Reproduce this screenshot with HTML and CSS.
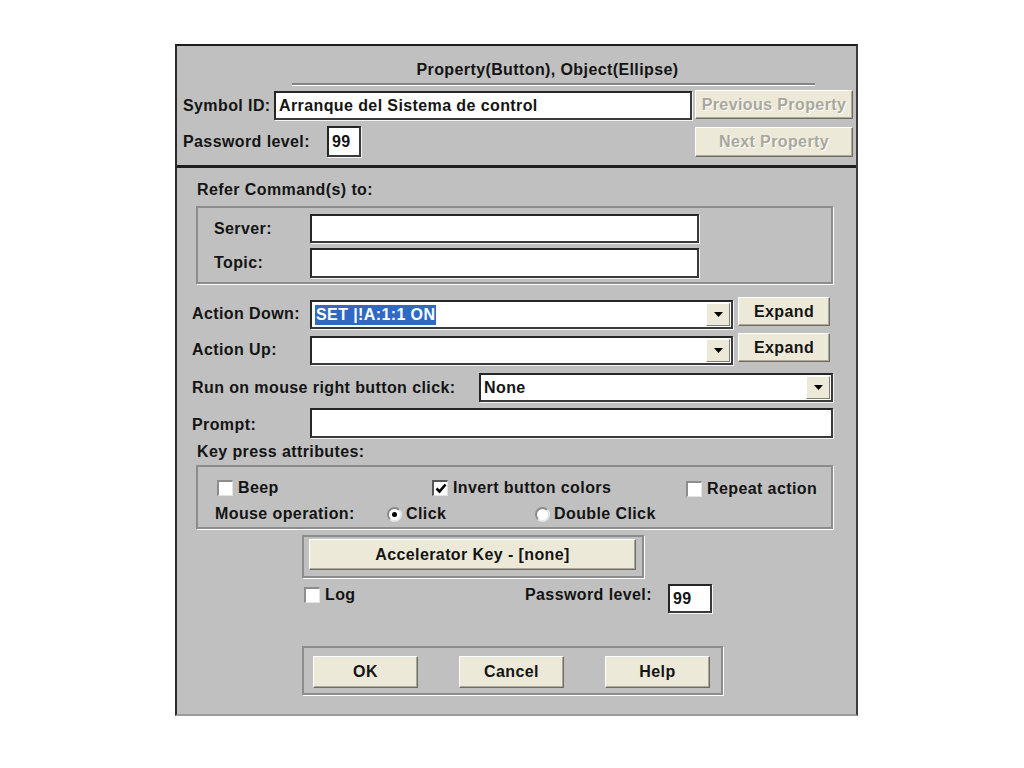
FILE: index.html
```html
<!DOCTYPE html>
<html lang="en">
<head>
  <meta charset="UTF-8">
  <title>Property(Button), Object(Ellipse)</title>
  <link rel="stylesheet" href="styles.css">
</head>
<body>
  <div class="dialog">

    <div class="top-panel">
      <div class="title">Property(Button), Object(Ellipse)</div>
      <div class="separator"></div>

      <div class="row row-symbol">
        <span class="lbl lbl-symbol">Symbol ID:</span>
        <div class="field field-symbol">Arranque del Sistema de control</div>
        <button class="btn btn-nav btn-prev" disabled>Previous Property</button>
      </div>

      <div class="row row-pass">
        <span class="lbl lbl-pass">Password level:</span>
        <div class="field field-small">99</div>
        <button class="btn btn-nav btn-next" disabled>Next Property</button>
      </div>
    </div>

    <div class="main-panel">
      <div class="heading">Refer Command(s) to:</div>
      <div class="group group-refer">
        <div class="refer-row">
          <span class="lbl lbl-refer">Server:</span>
          <div class="field field-refer"></div>
        </div>
        <div class="refer-row refer-topic">
          <span class="lbl lbl-refer">Topic:</span>
          <div class="field field-refer"></div>
        </div>
      </div>

      <div class="action-row action-down">
        <span class="lbl lbl-action">Action Down:</span>
        <div class="combo combo-action">
          <div class="combo-text"><span class="sel">SET |!A:1:1 ON</span></div>
          <div class="drop"><svg width="9" height="5" viewBox="0 0 9 5"><polygon points="0,0 9,0 4.5,5" fill="#000"/></svg></div>
        </div>
        <button class="btn btn-expand">Expand</button>
      </div>

      <div class="action-row action-up">
        <span class="lbl lbl-action">Action Up:</span>
        <div class="combo combo-action">
          <div class="combo-text"></div>
          <div class="drop"><svg width="9" height="5" viewBox="0 0 9 5"><polygon points="0,0 9,0 4.5,5" fill="#000"/></svg></div>
        </div>
        <button class="btn btn-expand">Expand</button>
      </div>

      <div class="run-row">
        <span class="lbl lbl-run">Run on mouse right button click:</span>
        <div class="combo combo-run">
          <div class="combo-text">None</div>
          <div class="drop"><svg width="9" height="5" viewBox="0 0 9 5"><polygon points="0,0 9,0 4.5,5" fill="#000"/></svg></div>
        </div>
      </div>

      <div class="prompt-row">
        <span class="lbl lbl-prompt">Prompt:</span>
        <div class="field field-prompt"></div>
      </div>

      <div class="heading heading-key">Key press attributes:</div>
      <div class="group group-key">
        <div class="key-row">
          <div class="opt opt-beep"><span class="chk"></span>Beep</div>
          <div class="opt opt-invert">
            <span class="chk"><svg width="12" height="11" viewBox="0 0 12 11"><path d="M1.5 5.5 L4.5 8.5 L10.5 1.5" fill="none" stroke="#000" stroke-width="2.6"/></svg></span>Invert button colors
          </div>
          <div class="opt opt-repeat"><span class="chk"></span>Repeat action</div>
        </div>
        <div class="mouse-row">
          <span class="lbl lbl-mouse">Mouse operation:</span>
          <div class="opt opt-click"><span class="radio checked"></span>Click</div>
          <div class="opt"><span class="radio"></span>Double Click</div>
        </div>
      </div>

      <div class="group group-accel">
        <button class="btn btn-accel">Accelerator Key - [none]</button>
      </div>

      <div class="log-row">
        <div class="opt opt-log"><span class="chk"></span>Log</div>
        <span class="lbl lbl-pass2">Password level:</span>
        <div class="field field-pass2">99</div>
      </div>

      <div class="group group-buttons">
        <button class="btn btn-main">OK</button>
        <button class="btn btn-main">Cancel</button>
        <button class="btn btn-main">Help</button>
      </div>
    </div>

  </div>
</body>
</html>
```

FILE: styles.css
```css
* {
  box-sizing: border-box;
}
body {
  margin: 0;
  background-color: #fff;
  font-family: "Liberation Sans", Arial, sans-serif;
  font-weight: bold;
  font-size: 16px;
  letter-spacing: 0.4px;
  color: #141414;
}
.dialog {
  margin: 44px 0 0 175px;
  width: 683px;
  height: 672px;
  display: flex;
  flex-direction: column;
  background-color: #c0c0c0;
  border-top: 2px solid #1c1c1c;
  border-left: 2px solid #2a2a2a;
  border-right: 2px solid #3c3c3c;
  border-bottom: 2px solid #9c9c9c;
}

/* top part */
.top-panel {
  padding: 0 3px 8px 6px;
  border-bottom: 3px solid #1e1e1e;
}
.title {
  margin: 14px 0 0 109px;
  width: 523px;
  padding-right: 12px;
  line-height: 20px;
  text-align: center;
}
.separator {
  margin: 3px 0 0 109px;
  width: 523px;
  border-top: 2px solid #858585;
  border-bottom: 1px solid #fff;
}
.row {
  display: flex;
  align-items: center;
  height: 31px;
}
.row-symbol {
  margin-top: 4px;
}
.row-pass {
  margin-top: 5px;
}
.lbl {
  white-space: nowrap;
  flex-shrink: 0;
}
.lbl-symbol { width: 91px; }
.lbl-pass { width: 144px; }

.field {
  background-color: #fff;
  border: 2px solid #262626;
  border-right-color: #3a3a3a;
  border-bottom-color: #3a3a3a;
  box-shadow: 1px 1px 0 #f4f4f4;
  padding: 0 3px;
  line-height: 25px;
  white-space: nowrap;
  overflow: hidden;
}
.field-symbol {
  width: 418px;
  height: 29px;
}
.field-small {
  width: 34px;
  height: 31px;
  line-height: 27px;
}

.btn {
  font: inherit;
  letter-spacing: inherit;
  color: #141414;
  background-color: #ece9d8;
  border: 1px solid;
  border-color: #fff #6f6d63 #6f6d63 #fff;
  box-shadow: inset -1px -1px 0 #aca899;
  padding: 0;
  text-align: center;
}
.btn-nav {
  margin-left: auto;
  width: 158px;
  color: #a9a79c;
  text-shadow: 1px 1px 0 #fff;
}
.btn-prev {
  height: 29px;
  align-self: flex-start;
}
.btn-next {
  height: 30px;
  align-self: flex-start;
  margin-top: 1px;
}

/* lower part */
.main-panel {
  flex: 1;
  padding: 12px 23px 0 15px;
}
.heading {
  margin-left: 5px;
  line-height: 20px;
}
.group {
  border: 2px solid #8c8c8c;
  box-shadow: 1px 1px 0 #fff;
}
.group-refer {
  margin: 6px 0 0 4px;
  padding: 6px 0 4px 16px;
}
.refer-row {
  display: flex;
  align-items: center;
  height: 29px;
}
.refer-topic {
  margin-top: 5px;
  height: 30px;
}
.lbl-refer { width: 96px; }
.field-refer {
  width: 389px;
  height: 100%;
}

.action-row {
  display: flex;
  align-items: flex-start;
}
.action-down { margin-top: 13px; }
.action-up { margin-top: 4px; }
.lbl-action {
  width: 118px;
  line-height: 29px;
  margin-top: 2px;
}
.combo {
  display: flex;
  align-items: center;
  height: 29px;
  background-color: #fff;
  border: 2px solid #262626;
  border-right-color: #3a3a3a;
  border-bottom-color: #3a3a3a;
  box-shadow: 1px 1px 0 #f4f4f4;
}
.combo-action {
  width: 423px;
  margin-top: 3px;
}
.combo-text {
  flex: 1;
  padding-left: 3px;
  white-space: nowrap;
}
.sel {
  background-color: #3168c4;
  color: #fff;
  padding: 1px 1px 2px;
}
.drop {
  width: 24px;
  height: 23px;
  margin-right: 1px;
  display: flex;
  align-items: center;
  justify-content: center;
  background-color: #ece9d8;
  border: 1px solid;
  border-color: #fff #807e72 #807e72 #fff;
}
.btn-expand {
  margin-left: 5px;
  width: 92px;
  height: 29px;
}

.run-row {
  display: flex;
  align-items: center;
  margin-top: 8px;
}
.lbl-run { width: 287px; }
.combo-run { width: 354px; }

.prompt-row {
  display: flex;
  align-items: flex-start;
  margin-top: 6px;
}
.lbl-prompt {
  width: 118px;
  line-height: 20px;
  margin-top: 7px;
}
.field-prompt {
  width: 523px;
  height: 30px;
}

.heading-key {
  margin-top: 4px;
}
.group-key {
  margin: 3px 0 0 4px;
  height: 64px;
  padding: 9px 0 0 19px;
}
.key-row,
.mouse-row {
  display: flex;
  align-items: center;
  line-height: 20px;
}
.mouse-row {
  margin-top: 5px;
  margin-left: -2px;
}
.opt {
  display: flex;
  align-items: center;
  white-space: nowrap;
}
.opt-beep { width: 215px; }
.opt-invert { width: 254px; }
.opt-repeat { margin-top: 3px; }
.lbl-mouse { width: 172px; }
.opt-click { width: 148px; }
.chk {
  width: 16px;
  height: 16px;
  margin-right: 5px;
  display: flex;
  align-items: center;
  justify-content: center;
  background-color: #fff;
  border-top: 2px solid #8d8d8d;
  border-left: 2px solid #8d8d8d;
  border-right: 1px solid #e2e2e2;
  border-bottom: 1px solid #e2e2e2;
}
.opt-invert .chk {
  border-top-color: #555;
  border-left-color: #555;
}
.radio {
  width: 15px;
  height: 15px;
  margin-right: 4px;
  border-radius: 50%;
  background-color: #fff;
  border: 2px solid;
  border-color: #8a8a8a #e6e6e6 #e6e6e6 #8a8a8a;
  display: flex;
  align-items: center;
  justify-content: center;
}
.radio.checked::after {
  content: "";
  width: 5px;
  height: 5px;
  border-radius: 50%;
  background-color: #000;
}

.group-accel {
  margin: 6px 0 0 110px;
  width: 342px;
  height: 43px;
  padding: 2px 0 0 5px;
}
.btn-accel {
  width: 327px;
  height: 31px;
}

.log-row {
  display: flex;
  align-items: flex-start;
  height: 29px;
  margin-top: 6px;
}
.opt-log {
  margin-left: 112px;
  width: 221px;
  line-height: 20px;
  margin-top: 1px;
}
.lbl-pass2 {
  width: 143px;
  line-height: 20px;
  margin-top: 1px;
}
.field-pass2 {
  width: 44px;
  height: 29px;
}

.group-buttons {
  margin: 33px 0 0 110px;
  width: 421px;
  height: 49px;
  padding: 8px 0 0 9px;
  display: flex;
  align-items: flex-start;
  gap: 41px;
}
.btn-main {
  width: 105px;
  height: 32px;
}
```
